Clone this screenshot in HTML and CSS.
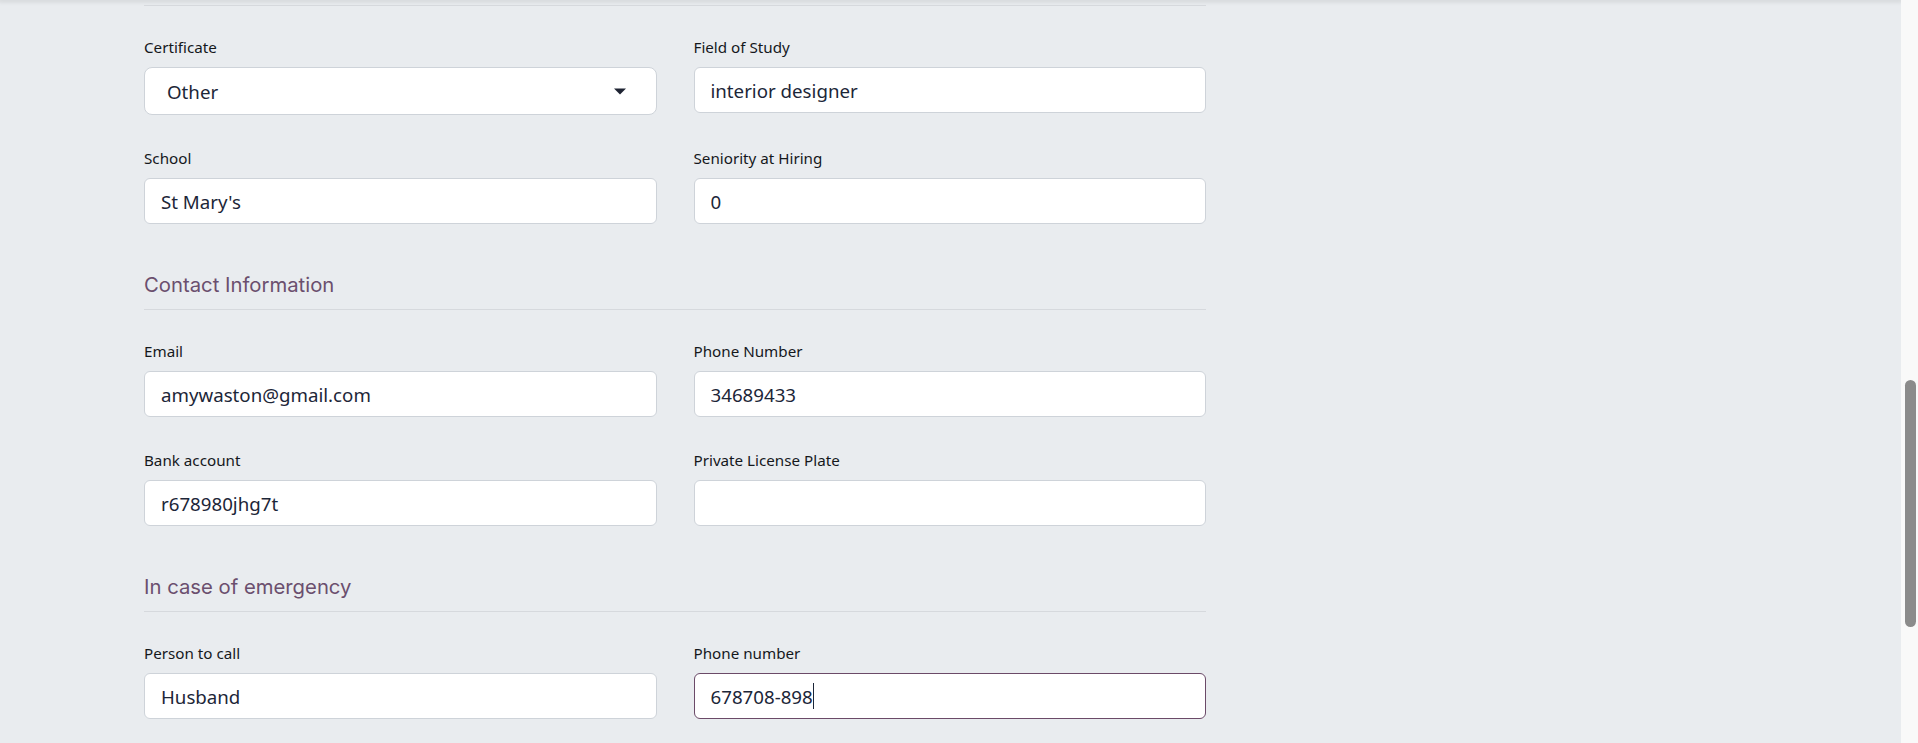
FILE: index.html
```html
<!DOCTYPE html>
<html lang="en">
<head>
<meta charset="utf-8">
<title>Employee form</title>
<link rel="stylesheet" href="styles.css">
</head>
<body>
<div class="page">
  <div class="top-shadow"></div>
  <div class="content">
    <div class="rule"></div>

    <div class="grid">
      <div class="field">
        <label class="label">Certificate</label>
        <div class="control select">
          <span>Other</span>
          <svg class="caret-down" width="12" height="7" viewBox="0 0 12 7"><path d="M0 0.5h12L6 6.5z" fill="#1f2433"/></svg>
        </div>
      </div>
      <div class="field">
        <label class="label">Field of Study</label>
        <input class="control" type="text" value="interior designer">
      </div>
      <div class="field">
        <label class="label">School</label>
        <input class="control" type="text" value="St Mary's">
      </div>
      <div class="field">
        <label class="label">Seniority at Hiring</label>
        <input class="control" type="text" value="0">
      </div>
    </div>

    <h3 class="section-title">Contact Information</h3>
    <div class="grid">
      <div class="field">
        <label class="label">Email</label>
        <input class="control" type="text" value="amywaston@gmail.com">
      </div>
      <div class="field">
        <label class="label">Phone Number</label>
        <input class="control" type="text" value="34689433">
      </div>
      <div class="field">
        <label class="label">Bank account</label>
        <input class="control" type="text" value="r678980jhg7t">
      </div>
      <div class="field">
        <label class="label">Private License Plate</label>
        <input class="control" type="text" value="">
      </div>
    </div>

    <h3 class="section-title">In case of emergency</h3>
    <div class="grid">
      <div class="field">
        <label class="label">Person to call</label>
        <input class="control" type="text" value="Husband">
      </div>
      <div class="field">
        <label class="label">Phone number</label>
        <div class="control focused">678708-898<span class="text-caret"></span></div>
      </div>
    </div>
  </div>
</div>
<div class="scrollbar"><div class="thumb"></div></div>
</body>
</html>
```
FILE: styles.css
```css
html, body {
  margin: 0;
  height: 743px;
  overflow: hidden;
}
body {
  display: flex;
  background: #e9ecef;
  font-family: "Noto Sans", "Open Sans", sans-serif;
}
.page {
  flex: 1;
  min-width: 0;
}
.top-shadow {
  height: 0;
  box-shadow: 0 0 4px 2px rgba(0, 0, 0, 0.10);
}
.content {
  margin-left: 144px;
  width: 1062px;
}
.rule {
  height: 1px;
  margin-top: 5px;
  background: #d6d9dd;
}
.grid {
  display: grid;
  grid-template-columns: 1fr 1fr;
  column-gap: 37px;
  row-gap: 33px;
  margin-top: 31px;
  align-items: start;
}
.field {
  display: flex;
  flex-direction: column;
}
.label {
  display: block;
  font-size: 15.2px;
  line-height: 20px;
  color: #15181c;
  margin-bottom: 10px;
}
.control {
  box-sizing: border-box;
  width: 100%;
  height: 46px;
  margin: 0;
  padding: 0 16px;
  border: 1px solid #ced3d9;
  border-radius: 6px;
  background: #fff;
  font-family: "Noto Sans", "Open Sans", sans-serif;
  font-size: 18.7px;
  color: #1c2638;
  outline: none;
  display: flex;
  align-items: center;
}
.select {
  height: 48px;
  padding-left: 22px;
  padding-right: 30px;
  border-radius: 8px;
  justify-content: space-between;
}
.caret-down {
  display: block;
}
.focused {
  border-color: #6b4a68;
}
.text-caret {
  display: inline-block;
  width: 1px;
  height: 26px;
  background: #1c2638;
}
.section-title {
  margin: 48px 0 0;
  padding-bottom: 12px;
  border-bottom: 1px solid #d6d9dd;
  font-family: Inter, "Noto Sans", sans-serif;
  font-weight: 400;
  font-size: 20.3px;
  line-height: 25px;
  color: #6b4f6e;
}
.scrollbar {
  flex: 0 0 17px;
  background: #f9f9f9;
}
.thumb {
  width: 11px;
  height: 247px;
  margin: 380px 0 0 4px;
  border-radius: 6px;
  background: #8b8b8b;
}
```
